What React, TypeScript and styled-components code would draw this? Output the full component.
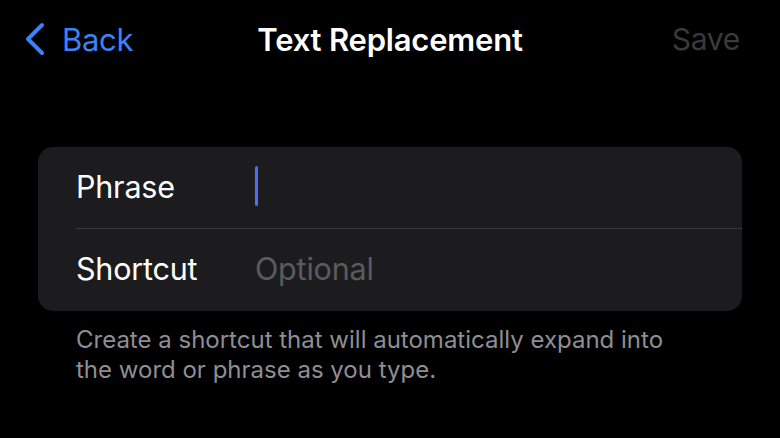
import React from 'react';
import styled, { createGlobalStyle } from 'styled-components';

const GlobalStyle = createGlobalStyle`
    html, body {
        margin: 0;
        padding: 0;
        background: #000;
    }
    body {
        font-family: Inter, "Noto Sans", sans-serif;
        -webkit-font-smoothing: antialiased;
    }
`;

const Screen = styled.div`
    width: 780px;
    height: 438px;
    background: #000;
    display: flex;
    flex-direction: column;
    overflow: hidden;
`;

const NavBar = styled.div`
    height: 78px;
    display: grid;
    grid-template-columns: 1fr auto 1fr;
    align-items: center;
    padding: 0 40px;
`;

const BackButton = styled.div`
    display: flex;
    align-items: center;
    gap: 16px;
    margin-left: -16px;
    color: #3b82f6;
    font-size: 31px;
    letter-spacing: -0.3px;
`;

const Title = styled.div`
    color: #fff;
    font-size: 31px;
    font-weight: 600;
    letter-spacing: -0.2px;
`;

const SaveButton = styled.div`
    justify-self: end;
    color: #3a3a3c;
    font-size: 30px;
    letter-spacing: -0.3px;
`;

const Content = styled.div`
    padding: 69px 38px 0 38px;
    display: flex;
    flex-direction: column;
`;

const Card = styled.div`
    background: #1c1c1e;
    border-radius: 15px;
    padding-left: 38px;
    display: flex;
    flex-direction: column;
`;

const Row = styled.div<{ $divider?: boolean }>`
    box-sizing: border-box;
    height: 82px;
    display: grid;
    grid-template-columns: 179px 1fr;
    align-items: center;
    padding-bottom: 3px;
    border-bottom: ${(p) => (p.$divider ? '1px solid #38383a' : 'none')};
`;

const Label = styled.div`
    color: #fff;
    font-size: 30.5px;
    letter-spacing: -0.2px;
`;

const Placeholder = styled.div`
    color: #5b5b5f;
    font-size: 30.5px;
    letter-spacing: -0.2px;
`;

const Caret = styled.div`
    width: 3px;
    height: 40px;
    border-radius: 2px;
    background: #4d6ef5;
`;

const Footer = styled.p`
    margin: 14px 0 0 38px;
    color: #8e8e93;
    font-size: 24px;
    line-height: 30px;
    max-width: 612px;
`;

const Chevron = () => (
    <svg width="22" height="34" viewBox="0 0 22 34" fill="none">
        <path d="M18 3L4 17l14 14" stroke="#3b82f6" strokeWidth="4" strokeLinecap="round" strokeLinejoin="round" />
    </svg>
);

export default function App() {
    return (
        <Screen>
            <GlobalStyle />
            <NavBar>
                <BackButton>
                    <Chevron />
                    Back
                </BackButton>
                <Title>Text Replacement</Title>
                <SaveButton>Save</SaveButton>
            </NavBar>
            <Content>
                <Card>
                    <Row $divider>
                        <Label>Phrase</Label>
                        <Caret />
                    </Row>
                    <Row>
                        <Label>Shortcut</Label>
                        <Placeholder>Optional</Placeholder>
                    </Row>
                </Card>
                <Footer>
                    Create a shortcut that will automatically expand into the word or phrase as you type.
                </Footer>
            </Content>
        </Screen>
    );
}
